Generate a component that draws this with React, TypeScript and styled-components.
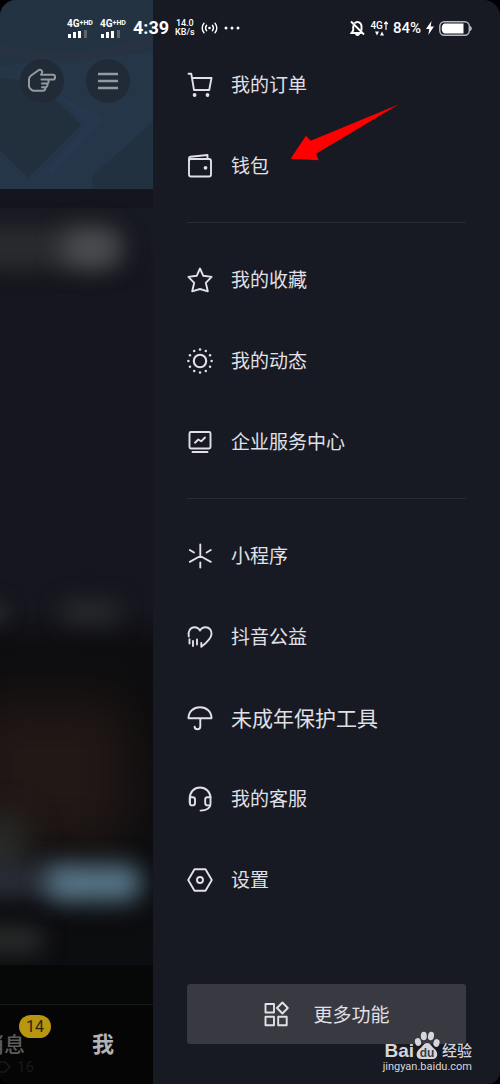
import React from "react";
import styled, { createGlobalStyle } from "styled-components";

const Global = createGlobalStyle`
  * { box-sizing: border-box; }
  body { margin: 0; background: #000; }
  button {
    font: inherit;
    color: inherit;
    background: none;
    border: 0;
    padding: 0;
    margin: 0;
    cursor: pointer;
  }
`;

const Screen = styled.div`
  position: relative;
  display: flex;
  min-height: 100vh;
  overflow: hidden;
  border-radius: 16px 16px 12px 12px;
  background: #171923;
  color: #e0e0e6;
  font-family: Roboto, "Noto Sans CJK SC", sans-serif;
`;

/* ---------- status bar ---------- */

const StatusBar = styled.header`
  position: absolute;
  inset: 0 0 auto 0;
  z-index: 2;
  display: flex;
  align-items: center;
  justify-content: space-between;
  height: 56px;
  padding: 0 28px 0 67px;
  color: #fff;
`;

const StatusGroup = styled.div<{ $gap: number }>`
  display: flex;
  align-items: center;
  gap: ${(p) => p.$gap}px;
`;

const Signal = styled.div`
  display: flex;
  flex-direction: column;
  gap: 1px;
  width: 27px;
  font-size: 10px;
  line-height: 10px;
  font-weight: 700;
  white-space: nowrap;

  sup {
    font-size: 7px;
    line-height: 0;
    vertical-align: 2px;
  }
`;

const Time = styled.span`
  font-size: 18px;
  line-height: 20px;
  font-weight: 700;
`;

const Stack = styled.div`
  display: flex;
  flex-direction: column;
  align-items: center;
  font-size: 9px;
  line-height: 9px;
  font-weight: 500;
`;

const Network = styled.span`
  display: flex;
  align-items: center;
  gap: 1px;
  font-size: 10px;
  line-height: 10px;
`;

const Percent = styled.span`
  font-size: 15px;
  line-height: 20px;
  font-weight: 500;
`;

/* ---------- page behind the drawer ---------- */

const Behind = styled.main`
  display: flex;
  flex-direction: column;
  flex: 0 0 153px;
  overflow: hidden;
  background: #15161e;
`;

const Cover = styled.div`
  position: relative;
  display: flex;
  justify-content: flex-end;
  align-items: flex-start;
  gap: 22px;
  height: 189px;
  padding: 59px 23px 0 0;
  background: #233342;
`;

const CoverArt = styled.svg`
  position: absolute;
  inset: 0;
`;

const RoundButton = styled.button`
  position: relative;
  display: grid;
  place-items: center;
  width: 44px;
  height: 44px;
  border-radius: 50%;
  background: #212b38;
  color: #9599a0;
`;

const Haze = styled.div<{ $height?: number; $bg: string }>`
  position: relative;
  overflow: hidden;
  flex: ${(p) => (p.$height ? `0 0 ${p.$height}px` : "1")};
  background: ${(p) => p.$bg};
`;

const Blob = styled.span<{
  $x: number;
  $y: number;
  $w: number;
  $h: number;
  $color: string;
  $blur: number;
}>`
  position: absolute;
  left: ${(p) => p.$x}px;
  top: ${(p) => p.$y}px;
  width: ${(p) => p.$w}px;
  height: ${(p) => p.$h}px;
  border-radius: 16px;
  background: ${(p) => p.$color};
  filter: blur(${(p) => p.$blur}px);
`;

const TabBar = styled.nav`
  position: relative;
  display: flex;
  justify-content: flex-end;
  align-items: center;
  gap: 67px;
  height: 80px;
  padding-right: 39px;
  border-top: 1px solid #15191b;
  background: #050505;
`;

const Tab = styled.button<{ $active?: boolean }>`
  position: relative;
  flex: none;
  font-size: ${(p) => (p.$active ? 22 : 21)}px;
  line-height: 28px;
  font-weight: ${(p) => (p.$active ? 700 : 500)};
  color: ${(p) => (p.$active ? "#b4b4b4" : "#5c5c5c")};
`;

const Badge = styled.span`
  position: absolute;
  left: 36px;
  top: -16px;
  width: 32px;
  height: 23px;
  border-radius: 12px;
  background: #b8960f;
  color: #2a2410;
  font-size: 16px;
  line-height: 23px;
  font-weight: 400;
  text-align: center;
`;

const Likes = styled.span`
  position: absolute;
  left: 0;
  bottom: 8px;
  display: flex;
  align-items: center;
  gap: 6px;
  font-size: 15px;
  line-height: 18px;
  color: #171919;
`;

/* ---------- drawer ---------- */

const Drawer = styled.aside`
  flex: 1;
  display: flex;
  flex-direction: column;
  min-width: 0;
  padding: 44px 34px 40px;
`;

const Row = styled.button`
  position: relative;
  display: flex;
  align-items: center;
  gap: 18px;
  width: 100%;
  height: 81px;
  text-align: left;
`;

const Label = styled.span<{ $wide?: boolean }>`
  padding-top: 3px;
  font-size: ${(p) => (p.$wide ? 21 : 19)}px;
  line-height: 28px;
  white-space: nowrap;
`;

const Divider = styled.hr`
  width: 100%;
  height: 1px;
  margin: 16px 0;
  border: 0;
  background: #2a2b35;
`;

const Arrow = styled.svg`
  position: absolute;
  left: 103px;
  top: -21px;
  pointer-events: none;
`;

const MoreButton = styled.button`
  display: flex;
  justify-content: center;
  align-items: center;
  gap: 24px;
  width: 100%;
  height: 60px;
  margin-top: auto;
  border-radius: 3px;
  background: #393942;
`;

const Watermark = styled.footer`
  position: absolute;
  right: 28px;
  bottom: 10px;
  display: flex;
  flex-direction: column;
  align-items: flex-end;
  color: #d6d6da;
`;

const Brand = styled.div`
  display: flex;
  align-items: flex-end;
  font-family: "Liberation Sans", "Noto Sans CJK SC", sans-serif;
  font-size: 19px;
  line-height: 18px;
  font-weight: 700;
`;

const BrandName = styled.span`
  margin-left: 2px;
  font-size: 15px;
  font-weight: 500;
`;

const Site = styled.span`
  font-size: 11px;
  line-height: 14px;
`;

/* ---------- icons ---------- */

const Icon = ({ children }: { children: React.ReactNode }) => (
  <svg
    width="26"
    height="26"
    viewBox="0 0 26 26"
    fill="none"
    stroke="currentColor"
    strokeWidth="1.9"
    strokeLinecap="round"
    strokeLinejoin="round"
    aria-hidden="true"
  >
    {children}
  </svg>
);

const CartIcon = () => (
  <Icon>
    <path d="M1.5 1.8H4.3L7 18H22.200L24.500 6H5" />
    <circle cx="7.600" cy="23" r="1.9" fill="currentColor" stroke="none" />
    <circle cx="20.500" cy="23" r="1.9" fill="currentColor" stroke="none" />
  </Icon>
);

const WalletIcon = () => (
  <Icon>
    <rect x="2" y="6" width="22" height="17.500" rx="2" />
    <path d="M2 8V5.300C2 4.400 2.600 3.800 3.500 3.700L20.500 2V6" />
    <circle cx="18.500" cy="14.800" r="1.900" fill="currentColor" stroke="none" />
  </Icon>
);

const StarIcon = () => (
  <Icon>
    <path d="M13 1.500 16.300 8.800 24.600 9.900 18.800 15.800 20.800 24.300 13 22 5.200 24.300 7.200 15.800 1.400 9.900 9.700 8.800Z" />
  </Icon>
);

const MomentsIcon = () => (
  <Icon>
    <circle cx="13" cy="13" r="6.200" strokeWidth="2.100" />
    {Array.from({ length: 12 }, (_, i) => {
      const a = (i * Math.PI) / 6;
      return (
        <circle
          key={i}
          cx={13 + 11.6 * Math.cos(a)}
          cy={13 + 11.6 * Math.sin(a)}
          r="1.250"
          fill="currentColor"
          stroke="none"
        />
      );
    })}
  </Icon>
);

const BoardIcon = () => (
  <Icon>
    <rect x="2.500" y="3" width="21" height="16.500" rx="1.500" />
    <path d="M8 13.700 11.300 10.500 14.200 12.300 18 8.500M5.500 23H20.500" />
  </Icon>
);

const MiniAppIcon = () => (
  <Icon>
    <path d="M13.300 1.500V13L2.800 18.800M13.300 13 23.800 18.800M2.800 7 7 9.500M23.800 7 19.600 9.500M13.300 19.500V24.500" />
  </Icon>
);

const CharityIcon = () => (
  <Icon>
    <path d="M1.800 12.500C.8 7 3.500 3.200 7.500 3.200 10 3.200 12 4.600 13 6.600 14 4.600 16 3.200 18.500 3.200 22.500 3.200 25 6.500 24.500 10.300 24 15 18.500 19.500 14.300 22.800V19M2.500 15.200V19.500M6 17V22M10 15.500V20.500" />
  </Icon>
);

const UmbrellaIcon = () => (
  <Icon>
    <path d="M1.500 13.200C1.500 6.500 6.500 2.200 13 2.200S24.500 6.500 24.500 13.200ZM13.300 13.200V21.500C13.300 25 7.800 25.200 7.600 21.600" />
  </Icon>
);

const HeadsetIcon = () => (
  <Icon>
    <path d="M2.800 17V12C2.800 6 7.200 1.500 13 1.500S23.500 6 23.500 12V17.500C23.500 22 19.500 24.600 13.500 24.600" />
    <path d="M2.800 11.200H5.600C7 11.200 8 12 8 13.500V17C8 18.500 7 19.400 5.600 19.400H5C3.600 19.400 2.800 18.500 2.800 17ZM23.500 11.200H20.500C19.200 11.200 18.200 12 18.200 13.500V17C18.200 18.500 19.200 19.400 20.500 19.400H22.800" />
  </Icon>
);

const SettingsIcon = () => (
  <Icon>
    <path d="M7.500 2.200H18.500L24.800 13 18.500 23.800H7.500L1.200 13Z" />
    <circle cx="13" cy="13" r="3" />
  </Icon>
);

const MoreIcon = () => (
  <Icon>
    <path d="M2.500 3H11V11.500H2.500ZM2.500 15.800H11V24.200H2.500ZM15.200 15.800H23.700V24.200H15.200ZM19.400 1.500 24.800 7 19.400 12.500 14 7Z" />
  </Icon>
);

const HandIcon = () => (
  <svg
    width="30"
    height="26"
    viewBox="0 0 30 26"
    fill="none"
    stroke="currentColor"
    strokeWidth="2"
    strokeLinejoin="round"
    strokeLinecap="round"
    aria-hidden="true"
  >
    <path d="M14 6.800H25.800C28.800 6.800 28.800 11.600 25.800 11.600H14.500M20.500 11.600C22.200 12.500 22 15.200 20.200 15.500H15M20.200 15.500C21 17 20.300 18.900 18.600 19.200H15M18.600 19.200C18.600 21.800 17.500 22.800 15.500 22.800H6.500C5.500 22.800 2 19.800 2 18.500V11.500C2 9.800 2.500 8.800 3.800 7.800L11.500 2.200C13.500 1 16 2.800 15 5L14 6.800" />
  </svg>
);

const MenuIcon = () => (
  <svg width="20" height="18" viewBox="0 0 20 18" aria-hidden="true">
    <path d="M0 2H20M0 9H20M0 16H20" stroke="currentColor" strokeWidth="2.500" />
  </svg>
);

const SignalBars = () => (
  <svg width="22" height="8" viewBox="0 0 22 8" fill="#fff" aria-hidden="true">
    <rect x="1" y="4" width="3" height="4" />
    <rect x="6" y="2" width="3" height="6" />
    <rect x="11" y="1" width="3" height="7" />
    <rect x="17" y="0" width="3" height="8" opacity=".25" />
  </svg>
);

const HotspotIcon = () => (
  <svg
    width="17"
    height="12"
    viewBox="0 0 17 12"
    fill="none"
    stroke="#fff"
    strokeWidth="1.400"
    strokeLinecap="round"
    aria-hidden="true"
  >
    <path d="M3 1.200C.6 3.800.6 8.200 3 10.800M14 1.200C16.400 3.800 16.400 8.200 14 10.800M5.600 3.300C4.200 5 4.200 7 5.600 8.700M11.400 3.300C12.800 5 12.800 7 11.400 8.700" />
    <circle cx="8.500" cy="6" r="1.300" fill="#fff" stroke="none" />
  </svg>
);

const DotsIcon = () => (
  <svg width="16" height="4" viewBox="0 0 16 4" fill="#fff" aria-hidden="true">
    <circle cx="2" cy="2" r="1.500" />
    <circle cx="8" cy="2" r="1.500" />
    <circle cx="14" cy="2" r="1.500" />
  </svg>
);

const MutedBellIcon = () => (
  <svg
    width="15"
    height="17"
    viewBox="0 0 15 17"
    fill="none"
    stroke="#fff"
    strokeWidth="1.900"
    aria-hidden="true"
  >
    <path d="M4.500 3.200C7.300.6 11.500 2.500 11.500 6.500V10.500M3.200 5.500V10.500L1.500 13H11.500M1 1.500 14 14.500" />
    <path d="M5 14H10C9.500 16.600 5.500 16.600 5 14Z" fill="#fff" stroke="none" />
  </svg>
);

const UpArrowIcon = () => (
  <svg width="4" height="9" viewBox="0 0 4 9" fill="none" stroke="#fff" strokeWidth="1.200" aria-hidden="true">
    <path d="M2 9V1M0 3.200 2 1 4 3.200" />
  </svg>
);

const DataIcon = () => (
  <svg width="9" height="5" viewBox="0 0 9 5" fill="#fff" aria-hidden="true">
    <path d="M0 .5H4L2 4.500ZM5 4.500H9L7 .5Z" />
  </svg>
);

const BoltIcon = () => (
  <svg width="8" height="14" viewBox="0 0 8 14" fill="#fff" aria-hidden="true">
    <path d="M5.500 0 0 8H3.300L2.300 14 8 5.500H4.700Z" />
  </svg>
);

const BatteryIcon = () => (
  <svg width="33" height="15" viewBox="0 0 33 15" aria-hidden="true">
    <rect x=".8" y=".8" width="29.500" height="13.400" rx="4.500" fill="none" stroke="#b9bac0" strokeWidth="1.400" />
    <path d="M5.500 2.600H24.500V12.400H5.500C1.800 12.400 1.800 2.600 5.500 2.600Z" fill="#fff" />
    <path d="M31.300 5C33 5.500 33 9.500 31.300 10Z" fill="#fff" />
  </svg>
);

const PawIcon = () => (
  <svg width="26" height="29" viewBox="0 0 26 29" fill="#d6d6da" aria-hidden="true">
    <ellipse cx="4" cy="11" rx="3" ry="4" transform="rotate(-15 4 11)" />
    <ellipse cx="9.800" cy="5" rx="3" ry="4.300" />
    <ellipse cx="17" cy="5" rx="3" ry="4.300" transform="rotate(10 17 5)" />
    <ellipse cx="22.500" cy="12" rx="3" ry="4" transform="rotate(15 22.500 12)" />
    <path d="M13.200 12C16.500 12 17.500 15.500 20 17.500 25 21.500 24 28 18.500 28H7.500C1.500 28 1 21.500 6 17.500 8.800 15.300 9.800 12 13.200 12Z" />
    <text
      x="13"
      y="26"
      textAnchor="middle"
      fontFamily="Liberation Sans, sans-serif"
      fontSize="12"
      fontWeight="700"
      fill="#3b3b45"
    >
      du
    </text>
  </svg>
);

/* ---------- data ---------- */

type Item = { label: string; icon: React.ReactNode; wide?: boolean; pointed?: boolean };

const groups: Item[][] = [
  [
    { label: "我的订单", icon: <CartIcon /> },
    { label: "钱包", icon: <WalletIcon />, pointed: true },
  ],
  [
    { label: "我的收藏", icon: <StarIcon /> },
    { label: "我的动态", icon: <MomentsIcon /> },
    { label: "企业服务中心", icon: <BoardIcon /> },
  ],
  [
    { label: "小程序", icon: <MiniAppIcon /> },
    { label: "抖音公益", icon: <CharityIcon /> },
    { label: "未成年保护工具", icon: <UmbrellaIcon />, wide: true },
    { label: "我的客服", icon: <HeadsetIcon /> },
    { label: "设置", icon: <SettingsIcon /> },
  ],
];

const SimSignal = () => (
  <Signal>
    <span>
      4G<sup>+HD</sup>
    </span>
    <SignalBars />
  </Signal>
);

export default function App() {
  return (
    <Screen>
      <Global />
      <StatusBar>
        <StatusGroup $gap={6}>
          <SimSignal />
          <SimSignal />
          <Time>4:39</Time>
          <Stack>
            <span>14.0</span>
            <span>KB/s</span>
          </Stack>
          <HotspotIcon />
          <DotsIcon />
        </StatusGroup>
        <StatusGroup $gap={5}>
          <MutedBellIcon />
          <Stack>
            <Network>
              4G
              <UpArrowIcon />
            </Network>
            <DataIcon />
          </Stack>
          <Percent>84%</Percent>
          <BoltIcon />
          <BatteryIcon />
        </StatusGroup>
      </StatusBar>

      <Behind>
        <Cover>
          <CoverArt width="153" height="189" viewBox="0 0 153 189" aria-hidden="true">
            <path d="M0 66 50 60 153 52V125L92 178V189H0Z" fill="#253649" />
            <path d="M0 42C50 58 105 54 153 30V46C105 62 50 66 0 54Z" fill="#273243" />
            <path d="M0 78 38 82 81 125 28 178 0 150Z" fill="#22303e" />
            <path d="M58 94 104 118 52 176 46 172 86 125Z" fill="#27384e" />
            <path d="M153 122 92 176V189H153Z" fill="#22313f" />
          </CoverArt>
          <RoundButton aria-label="指向">
            <HandIcon />
          </RoundButton>
          <RoundButton aria-label="菜单">
            <MenuIcon />
          </RoundButton>
        </Cover>
        <Haze $height={458} $bg="linear-gradient(#15151d 0 19px, #181a22 19px, #15161e 90px, #15161e 420px, #0e0e10)">
          <Blob $x={-30} $y={38} $w={150} $h={42} $color="#2a2b2e" $blur={10} />
          <Blob $x={62} $y={42} $w={58} $h={34} $color="#505156" $blur={13} />
          <Blob $x={60} $y={412} $w={60} $h={22} $color="#292b2d" $blur={11} />
          <Blob $x={-20} $y={412} $w={28} $h={22} $color="#27292b" $blur={9} />
        </Haze>
        <Haze $bg="linear-gradient(#0e0e10, #0b0b0d 60px, #0c0d10)">
          <Blob $x={-30} $y={50} $w={160} $h={150} $color="#221816" $blur={26} />
          <Blob $x={-30} $y={170} $w={56} $h={60} $color="#2a2d2a" $blur={16} />
          <Blob $x={-30} $y={216} $w={100} $h={34} $color="#2a2e38" $blur={12} />
          <Blob $x={46} $y={218} $w={96} $h={36} $color="#5a798c" $blur={12} />
          <Blob $x={-30} $y={280} $w={74} $h={26} $color="#2b2c2c" $blur={11} />
        </Haze>
        <Haze $height={39} $bg="#060707" />
        <TabBar>
          <Tab>
            消息<Badge>14</Badge>
          </Tab>
          <Tab $active>我</Tab>
          <Likes>
            <svg width="11" height="12" viewBox="0 0 11 12" fill="none" stroke="currentColor" strokeWidth="1.500" aria-hidden="true">
              <path d="M0 1H5L10 6 5 11H0" />
            </svg>
            16
          </Likes>
        </TabBar>
      </Behind>

      <Drawer>
        {groups.map((items, g) => (
          <React.Fragment key={g}>
            {g > 0 && <Divider />}
            {items.map((item) => (
              <Row key={item.label}>
                {item.icon}
                <Label $wide={item.wide}>{item.label}</Label>
                {item.pointed && (
                  <Arrow width="110" height="58" viewBox="0 0 110 58" aria-hidden="true">
                    <path d="M.5 54.700 16 31.700 20.700 36.700 109 .3 26 49.700 28.700 56.300Z" fill="#fe0000" />
                  </Arrow>
                )}
              </Row>
            ))}
          </React.Fragment>
        ))}
        <MoreButton>
          <MoreIcon />
          <Label>更多功能</Label>
        </MoreButton>
      </Drawer>

      <Watermark>
        <Brand>
          Bai
          <PawIcon />
          <BrandName>经验</BrandName>
        </Brand>
        <Site>jingyan.baidu.com</Site>
      </Watermark>
    </Screen>
  );
}
